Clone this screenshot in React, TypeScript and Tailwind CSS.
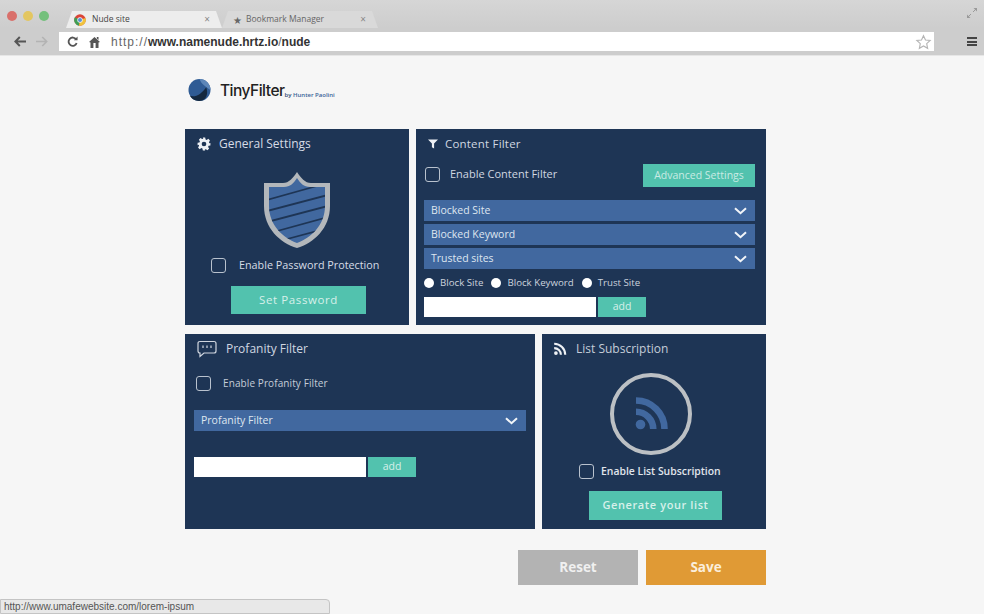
import React from "react";

const sans = "font-['Open_Sans','Noto_Sans',sans-serif]";

function Check() {
  return <span className="block w-[15px] h-[15px] shrink-0 rounded-[3px] border border-[#b9c2ce] bg-[#1e3555]" />;
}

function Chevron() {
  return (
    <svg width="13" height="8" viewBox="0 0 13 8" fill="none" stroke="#f2f5f9" strokeWidth="2">
      <path d="M1 1.200 L6.500 6.200 L12 1.200" />
    </svg>
  );
}

function Dropdown({ label, className = "" }: { label: string; className?: string }) {
  return (
    <div className={"h-[21px] bg-[#41689f] flex items-center justify-between pl-[7px] pr-[8px] text-[10.5px] text-[#dfe6f0] " + className}>
      <span>{label}</span>
      <Chevron />
    </div>
  );
}

function AddRow() {
  return (
    <div className="flex gap-[2px] items-stretch h-[20px]">
      <div className="w-[172px] bg-white" />
      <div className="w-[48px] bg-[#52c2ae] text-[#d7f0ea] text-[10.5px] flex items-center justify-center">add</div>
    </div>
  );
}

function Radio({ label }: { label: string }) {
  return (
    <span className="flex items-center gap-[6px] text-[9.7px] text-[#ccd3dd]">
      <span className="w-[10px] h-[10px] rounded-full bg-white" />
      {label}
    </span>
  );
}

function Shield() {
  return (
    <svg width="70" height="80" viewBox="0 0 70 80">
      <defs>
        <clipPath id="sh">
          <path d="M7 17 H22 C28 17 32 13 35 8 C38 13 42 17 48 17 H63 V36 C63 55 49 68 35 73 C21 68 7 55 7 36 Z" />
        </clipPath>
      </defs>
      <path d="M2 13 H21 C27 13 31 8 35 2 C39 8 43 13 49 13 H68 V36 C68 58 52 73 35 78 C18 73 2 58 2 36 Z" fill="#b3b7bb" />
      <path d="M7 17 H22 C28 17 32 13 35 8 C38 13 42 17 48 17 H63 V36 C63 55 49 68 35 73 C21 68 7 55 7 36 Z" fill="#41689f" />
      <g clipPath="url(#sh)" stroke="#1e3555" strokeWidth="1.800" fill="none">
        <path d="M5 30 L62 14" />
        <path d="M5 41 L66 25" />
        <path d="M5 52 L66 36" />
        <path d="M8 63 L66 47" />
        <path d="M14 72 L66 58" />
      </g>
    </svg>
  );
}

function Rss({ size, color, weight }: { size: number; color: string; weight: number }) {
  return (
    <svg width={size} height={size} viewBox="0 0 24 24" fill="none" stroke={color}>
      <circle cx="5" cy="19" r="3.200" fill={color} stroke="none" />
      <path d="M2 10.500 A11.500 11.500 0 0 1 13.500 22" strokeWidth={weight} />
      <path d="M2 3 A19 19 0 0 1 21 22" strokeWidth={weight} />
    </svg>
  );
}

function Gear() {
  return (
    <svg width="14" height="14" viewBox="0 0 24 24" fill="#eef1f5">
      <path fillRule="evenodd" d="M10 1h4l.7 3.200 1.900.8 2.800-1.800 2.800 2.800-1.800 2.800.8 1.900L23 10.400v4l-3.200.7-.8 1.900 1.800 2.800-2.800 2.800-2.800-1.800-1.900.8L14 23h-4l-.7-3.200-1.900-.8-2.800 1.800-2.800-2.800 1.800-2.800-.8-1.900L1 14v-4l3.200-.7.8-1.900L3.200 4.600 6 1.800l2.800 1.800 1.900-.8L10 1zm2 7a4 4 0 1 0 0 8 4 4 0 0 0 0-8z" />
    </svg>
  );
}

function ChromeLogo() {
  return (
    <svg width="12" height="12" viewBox="0 0 24 24">
      <circle cx="12" cy="12" r="11.500" fill="#db4437" />
      <path d="M12 12 L1.800 6.500 A11.500 11.500 0 0 0 10 23.400 Z" fill="#3f9e55" />
      <path d="M12 12 L22.800 8 A11.500 11.500 0 0 1 10 23.400 Z" fill="#f0c33c" />
      <circle cx="12" cy="12" r="5.400" fill="#f4f4f4" />
      <circle cx="12" cy="12" r="4" fill="#5b8fd6" />
    </svg>
  );
}

export default function App() {
  return (
    <div className={"relative w-[984px] h-[614px] overflow-hidden bg-[#f6f6f6] " + sans}>
      {/* browser chrome */}
      <div className="h-[56px] bg-[#cdcdcd] border-b border-[#e6e6e6] flex flex-col">
        <div className="h-[28px] flex items-end pl-[66px] pr-[10px] relative bg-gradient-to-b from-[#d6d6d6] to-[#cdcdcd]">
          <div className="absolute left-[7px] top-[11px] flex gap-[6px]">
            <span className="w-[10px] h-[10px] rounded-full bg-[#d9706b]" />
            <span className="w-[10px] h-[10px] rounded-full bg-[#e3c661]" />
            <span className="w-[10px] h-[10px] rounded-full bg-[#74c07c]" />
          </div>
          <div className="h-[17px] w-[156px] flex items-center pl-[8px] pr-[12px] text-[8.5px] text-[#444] bg-[#ededed] [clip-path:polygon(0_100%,6px_0,150px_0,156px_100%)]">
            <span className="mr-[6px] flex"><ChromeLogo /></span>
            <span className="flex-1">Nude site</span>
            <span className="text-[10px] text-[#888]">×</span>
          </div>
          <div className="h-[17px] w-[156px] flex items-center pl-[11px] pr-[12px] text-[8.5px] text-[#666] bg-[#d9d9d9] [clip-path:polygon(0_100%,6px_0,150px_0,156px_100%)]">
            <span className="w-[9px] mr-[4px] text-[10px] leading-none text-[#666]">★</span>
            <span className="flex-1">Bookmark Manager</span>
            <span className="text-[10px] text-[#888]">×</span>
          </div>
          <svg className="absolute right-[6px] top-[7px]" width="12" height="12" viewBox="0 0 12 12" stroke="#9a9a9a" fill="#9a9a9a" strokeWidth="1">
            <path d="M1 11 L5 7 M7 5 L11 1" />
            <path d="M7.500 1 H11 V4.500 Z M1 7.500 V11 H4.500 Z" stroke="none" />
          </svg>
        </div>
        <div className="flex-1 flex items-center pl-[14px] pr-[7px]">
          <svg width="12" height="11" viewBox="0 0 12 11" fill="none" stroke="#555" strokeWidth="2" className="mr-[10px]">
            <path d="M12 5.500 H2 M5.800 1 L1.300 5.500 L5.800 10" />
          </svg>
          <svg width="12" height="11" viewBox="0 0 12 11" fill="none" stroke="#b3b3b3" strokeWidth="1.600" className="mr-[11px]">
            <path d="M0 5.500 H10 M6.200 1 L10.700 5.500 L6.200 10" />
          </svg>
          <div className="w-[875px] h-[19px] bg-white flex items-center pl-[8px] pr-[2px] shrink-0 text-[12px] font-['Liberation_Sans',sans-serif]">
            <svg width="11" height="12" viewBox="0 0 12 12" fill="none" stroke="#555" strokeWidth="2" className="mr-[11px]">
              <path d="M10 3.200 A4.500 4.500 0 1 0 10.500 7" />
              <path d="M7.500 4 H11.500 V0 Z" fill="#555" stroke="none" />
            </svg>
            <svg width="11" height="12" viewBox="0 0 11 12" fill="#555" className="mr-[11px]">
              <path d="M5.500 1 L11 6 L9.500 6.500 V12 H6.600 V7 H4.400 V12 H1.500 V6.500 L0 6 Z" />
              <path d="M7.800 1 H9.500 V4 L7.800 2.600 Z" />
            </svg>
            <span className="text-[#666] tracking-[1px]">http://</span>
            <span className="text-[#333] font-bold">www.namenude.hrtz.io</span>
            <span className="text-[#666]">/</span>
            <span className="text-[#333] font-bold">nude</span>
            <svg width="17" height="16" viewBox="0 0 24 24" fill="none" stroke="#b5b5b5" strokeWidth="1.700" className="ml-auto">
              <path d="M12 2.500 L15 9 L22 9.800 L16.800 14.500 L18.200 21.500 L12 18 L5.800 21.500 L7.200 14.500 L2 9.800 L9 9 Z" />
            </svg>
          </div>
          <div className="ml-auto flex flex-col gap-[1.500px]">
            <span className="block w-[10px] h-[2px] bg-[#444]" />
            <span className="block w-[10px] h-[2px] bg-[#444]" />
            <span className="block w-[10px] h-[2px] bg-[#444]" />
          </div>
        </div>
      </div>

      {/* page */}
      <div className="w-[581px] ml-[185px]">
        {/* logo */}
        <div className="h-[73px] flex items-start pt-[22px] pl-[3px]">
          <svg width="23" height="24" viewBox="0 0 24 24" className="mr-[9px]">
            <circle cx="12" cy="12" r="11.500" fill="#2f5b94" />
            <path d="M12 .5 A11.500 11.500 0 0 1 23.500 12 C18 8 14 6 12 .5" fill="#5d86b8" />
            <path d="M2 18 C8 20 14 16 19 9 C21 15 20 20 15 23 C9 24.500 4 22 2 18" fill="#14283f" />
          </svg>
          <span className="text-[15.500px] leading-[26px] font-medium text-[#222] font-['Inter',sans-serif] tracking-[-0.5px]">TinyFilter</span>
          <span className="text-[6px] leading-[6px] font-semibold text-[#2c4a73] mt-[14px] whitespace-nowrap">
            by <span className="text-[#3a6296]">Hunter Paolini</span>
          </span>
        </div>

        <div className="flex flex-col gap-[9px]">
          <div className="flex gap-[7px] h-[196px]">
            {/* General settings */}
            <section className="w-[224px] bg-[#1e3555] flex flex-col items-center">
              <div className="self-stretch flex items-center pl-[12px] pt-[7px] h-[23px] gap-[8px] text-[12px] text-[#d6dce6]">
                <Gear />
                <span>General Settings</span>
              </div>
              <div className="mt-[18px] h-[80px]"><Shield /></div>
              <div className="self-stretch flex items-center h-[15px] pl-[26px] mt-[8px] gap-[13px] text-[10.800px] text-[#d7dde6]">
                <Check />
                <span>Enable Password Protection</span>
              </div>
              <div className="mt-[13px] ml-[3px] w-[135px] h-[28px] bg-[#52c2ae] text-[#d7f0ea] text-[11.500px] tracking-[0.6px] flex items-center justify-center">Set Password</div>
            </section>

            {/* Content filter */}
            <section className="w-[350px] bg-[#1e3555] flex flex-col pl-[8px] pr-[11px]">
              <div className="flex items-center pl-[4px] pt-[7px] h-[23px] gap-[7px] text-[11.500px] text-[#d0d7e1] tracking-[0.2px]">
                <svg width="10" height="10" viewBox="0 0 11 10" fill="#eef1f5"><path d="M0 0 H11 L6.700 4.500 V10 L4.300 8.500 V4.500 Z" /></svg>
                <span>Content Filter</span>
              </div>
              <div className="flex items-center justify-between h-[23px] mt-[12px]">
                <div className="flex items-center h-[15px] -mt-[2px] gap-[10px] pl-[1px] text-[11px] text-[#d0d7e1]">
                  <Check />
                  <span>Enable Content Filter</span>
                </div>
                <div className="w-[112px] h-[23px] bg-[#52c2ae] text-[#c9ebe4] text-[10.500px] flex items-center justify-center">Advanced Settings</div>
              </div>
              <div className="flex flex-col gap-[3px] mt-[13px]">
                <Dropdown label="Blocked Site" />
                <Dropdown label="Blocked Keyword" />
                <Dropdown label="Trusted sites" />
              </div>
              <div className="flex items-center h-[14px] mt-[7px] gap-[8px]">
                <Radio label="Block Site" />
                <Radio label="Block Keyword" />
                <Radio label="Trust Site" />
              </div>
              <div className="mt-[7px]"><AddRow /></div>
            </section>
          </div>

          <div className="flex gap-[7px] h-[195px]">
            {/* Profanity */}
            <section className="w-[350px] bg-[#1e3555] flex flex-col px-[9px]">
              <div className="flex items-center pl-[3px] pt-[5px] h-[25px] gap-[9px] text-[12px] text-[#d0d7e1]">
                <svg width="20" height="18" viewBox="0 0 20 18" fill="none" stroke="#d0d6df" strokeWidth="1.200">
                  <path d="M3 1.500 H17 Q19 1.500 19 3.500 V11 Q19 13 17 13 H7 L3 16.500 V13 Q1 13 1 11 V3.500 Q1 1.500 3 1.500 Z" />
                  <path d="M6 5.500 V8 M10 5.500 V8 M14 5.500 V8" />
                </svg>
                <span>Profanity Filter</span>
              </div>
              <div className="flex items-center gap-[12px] mt-[17px] h-[15px] ml-[2px] text-[10px] text-[#c5cdd8] tracking-[0.1px]">
                <Check />
                <span>Enable Profanity Filter</span>
              </div>
              <Dropdown label="Profanity Filter" className="mt-[19px]" />
              <div className="mt-[26px]"><AddRow /></div>
            </section>

            {/* List subscription */}
            <section className="w-[224px] bg-[#1e3555] flex flex-col items-start">
              <div className="self-stretch flex items-center pl-[11px] pt-[5px] h-[25px] gap-[9px] text-[12px] text-[#c5cdd8]">
                <Rss size={14} color="#eef1f5" weight={3.600} />
                <span>List Subscription</span>
              </div>
              <div className="mt-[14px] ml-[68px] w-[82px] h-[82px] rounded-full border-[4px] border-[#bcc0c4] flex items-center justify-center">
                <Rss size={36} color="#41689f" weight={4.400} />
              </div>
              <div className="flex items-center h-[15px] gap-[7px] mt-[9px] ml-[37px] text-[10.400px] font-semibold text-[#e0e5ec]">
                <Check />
                <span>Enable List Subscription</span>
              </div>
              <div className="mt-[12px] ml-[47px] w-[133px] h-[29px] bg-[#52c2ae] text-[#d7f0ea] text-[11px] font-semibold tracking-[0.6px] flex items-center justify-center">Generate your list</div>
            </section>
          </div>
        </div>

        <div className="flex justify-end gap-[8px] mt-[21px]">
          <div className="w-[120px] h-[35px] bg-[#b3b3b3] text-[#f0f0f0] text-[13.500px] font-bold flex items-center justify-center">Reset</div>
          <div className="w-[120px] h-[35px] bg-[#e09a35] text-[#fbeedb] text-[13.500px] font-bold flex items-center justify-center">Save</div>
        </div>
      </div>

      {/* status bubble */}
      <div className="absolute left-0 bottom-0 w-[330px] h-[15px] bg-[#e8e8e8] border border-[#c4c4c4] rounded-tr-[4px] pl-[3px] flex items-center text-[10px] text-[#555] font-['Liberation_Sans',sans-serif]">
        http://www.umafewebsite.com/lorem-ipsum
      </div>
    </div>
  );
}
